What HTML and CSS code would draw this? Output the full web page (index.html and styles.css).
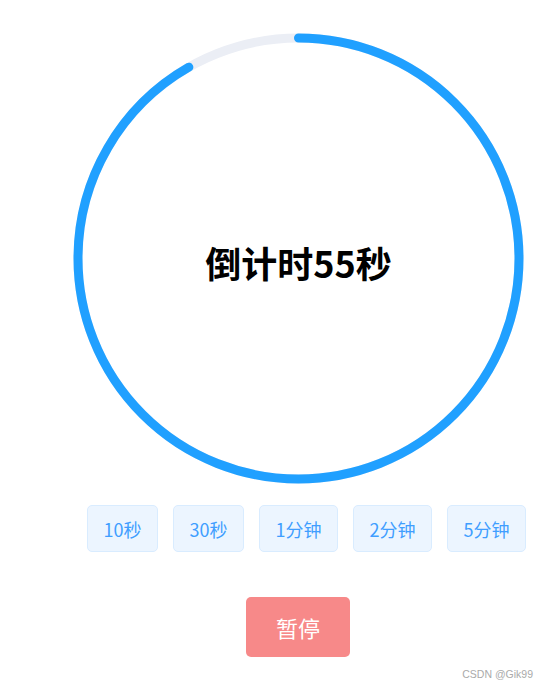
FILE: index.html
```html
<!DOCTYPE html>
<html lang="zh-CN">
<head>
    <meta charset="UTF-8">
    <meta name="viewport" content="width=device-width, initial-scale=1.0">
    <title>倒计时</title>
    <link rel="stylesheet" href="styles.css">
</head>
<body>
    <div class="page">
        <div class="progress">
            <svg class="ring" width="451" height="451" viewBox="0 0 451 451">
                <circle class="ring-track" cx="225.5" cy="225.5" r="220.5"></circle>
                <!-- 55 of 60 seconds left -->
                <circle class="ring-bar" cx="225.5" cy="225.5" r="220.5"
                        stroke-dasharray="1270.1 1385.4" transform="rotate(-90 225.5 225.5)"></circle>
            </svg>
            <div class="progress-text">倒计时55秒</div>
        </div>

        <div class="presets">
            <button class="btn-plain">10秒</button>
            <button class="btn-plain">30秒</button>
            <button class="btn-plain">1分钟</button>
            <button class="btn-plain">2分钟</button>
            <button class="btn-plain">5分钟</button>
        </div>

        <div class="actions">
            <button class="btn-danger">暂停</button>
        </div>

        <div class="watermark">CSDN @Gik99</div>
    </div>
</body>
</html>
```

FILE: styles.css
```css
* {
    box-sizing: border-box;
}

body {
    margin: 0;
    background: #fff;
    font-family: "Noto Sans CJK SC", "Microsoft YaHei", sans-serif;
}

.page {
    position: relative;
    width: 549px;
    height: 687px;
    overflow: hidden;
}

.progress {
    position: relative;
    width: 451px;
    height: 451px;
    margin: 0 0 0 73px;
    padding-top: 33px;
    box-sizing: content-box;
}

.ring {
    display: block;
}

.ring-track,
.ring-bar {
    fill: none;
    stroke-width: 9;
}

.ring-track {
    stroke: #ebeef5;
}

.ring-bar {
    stroke: #20a0ff;
    stroke-linecap: round;
}

.progress-text {
    position: absolute;
    left: 0;
    right: 0;
    top: 33px;
    height: 451px;
    display: flex;
    align-items: center;
    justify-content: center;
    padding-top: 7px;
    font-size: 36px;
    font-weight: bold;
    color: #000;
}

.presets {
    display: flex;
    gap: 15px;
    margin: 21px 0 0 87px;
}

.btn-plain {
    height: 47px;
    padding: 0 15.5px;
    font-family: inherit;
    font-size: 18px;
    color: #409eff;
    background: #ecf5ff;
    border: 1px solid #d9ecff;
    border-radius: 5px;
    cursor: pointer;
}

.actions {
    margin: 45px 0 0 246px;
}

.btn-danger {
    width: 104px;
    height: 60px;
    font-family: inherit;
    font-size: 22px;
    color: #fff;
    background: #f78989;
    border: none;
    border-radius: 5px;
    cursor: pointer;
}

.watermark {
    position: absolute;
    right: 16px;
    top: 668px;
    font-family: "Liberation Sans", Arial, sans-serif;
    font-size: 10.5px;
    color: #aaa;
}
```
